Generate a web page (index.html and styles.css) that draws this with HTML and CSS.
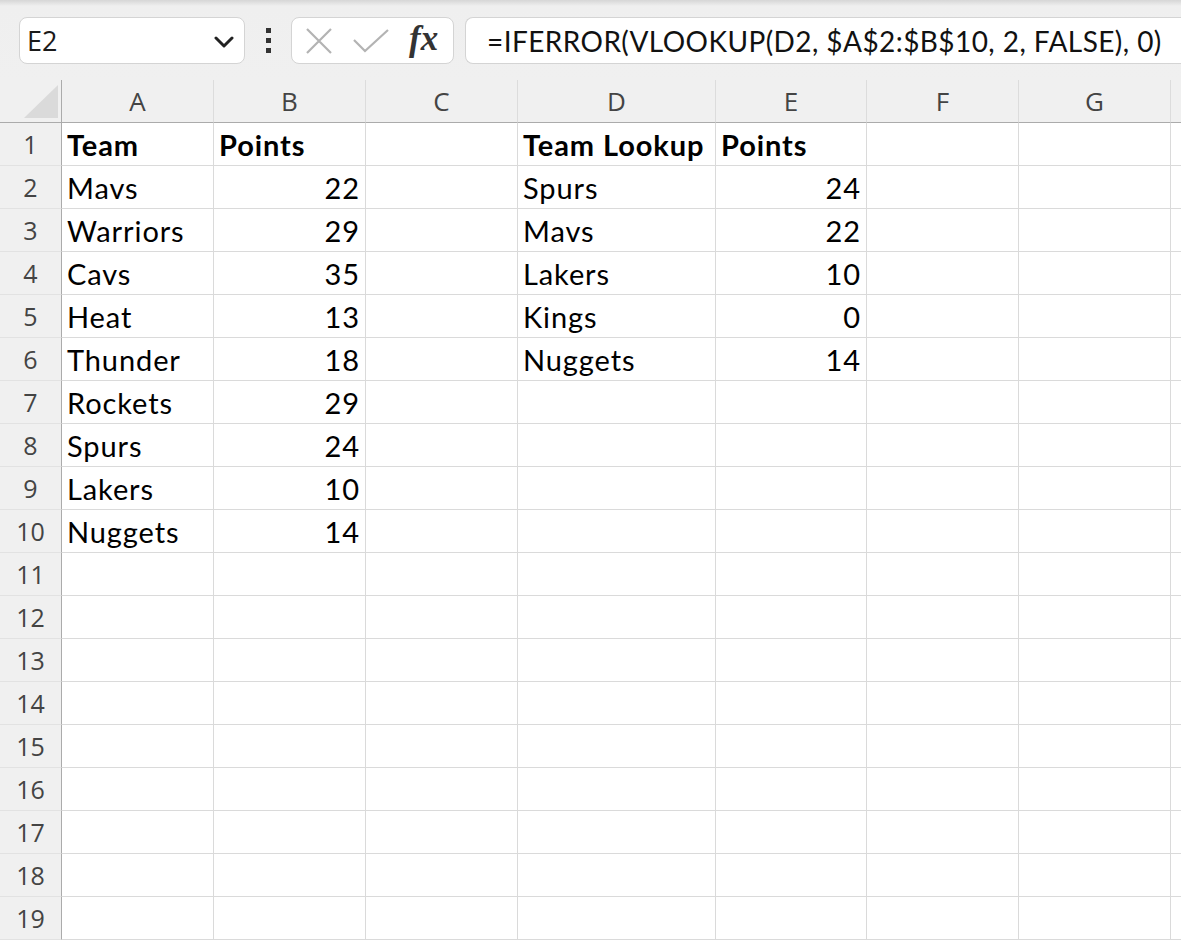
FILE: index.html
```html
<!DOCTYPE html>
<html lang="en">
<head>
  <meta charset="UTF-8" />
  <title>Team Lookup</title>
  <link rel="stylesheet" href="styles.css">
</head>
<body>

  <div class="toolbar">
    <div class="name-box">
      <span class="cell-ref">E2</span>
      <svg class="chevron" width="20" height="12" viewBox="0 0 20 12"><path d="M2 2 L10 10 L18 2" fill="none" stroke="#222" stroke-width="3" stroke-linecap="round" stroke-linejoin="round"/></svg>
    </div>
    <div class="kebab"><span></span><span></span><span></span></div>
    <div class="fx-box">
      <svg width="28" height="28" viewBox="0 0 28 28"><path d="M2 2 L26 26 M26 2 L2 26" stroke="#b3b3b3" stroke-width="2.2" fill="none"/></svg>
      <svg width="36" height="24" viewBox="0 0 36 24"><path d="M1 11 L12 22 L35 1" stroke="#b3b3b3" stroke-width="2.2" fill="none"/></svg>
      <span class="fx">fx</span>
    </div>
    <div class="formula">=IFERROR(VLOOKUP(D2, $A$2:$B$10, 2, FALSE), 0)</div>
  </div>

  <div class="sheet">
    <div class="row head">
      <div class="corner"><span class="tri"></span></div>
      <div>A</div><div>B</div><div>C</div><div>D</div><div>E</div><div>F</div><div>G</div><div></div>
    </div>
    <div class="row"><div class="num">1</div><div class="b">Team</div><div class="b">Points</div><div></div><div class="b">Team Lookup</div><div class="b">Points</div><div></div><div></div><div></div></div>
    <div class="row"><div class="num">2</div><div>Mavs</div><div class="r">22</div><div></div><div>Spurs</div><div class="r">24</div><div></div><div></div><div></div></div>
    <div class="row"><div class="num">3</div><div>Warriors</div><div class="r">29</div><div></div><div>Mavs</div><div class="r">22</div><div></div><div></div><div></div></div>
    <div class="row"><div class="num">4</div><div>Cavs</div><div class="r">35</div><div></div><div>Lakers</div><div class="r">10</div><div></div><div></div><div></div></div>
    <div class="row"><div class="num">5</div><div>Heat</div><div class="r">13</div><div></div><div>Kings</div><div class="r">0</div><div></div><div></div><div></div></div>
    <div class="row"><div class="num">6</div><div>Thunder</div><div class="r">18</div><div></div><div>Nuggets</div><div class="r">14</div><div></div><div></div><div></div></div>
    <div class="row"><div class="num">7</div><div>Rockets</div><div class="r">29</div><div></div><div></div><div></div><div></div><div></div><div></div></div>
    <div class="row"><div class="num">8</div><div>Spurs</div><div class="r">24</div><div></div><div></div><div></div><div></div><div></div><div></div></div>
    <div class="row"><div class="num">9</div><div>Lakers</div><div class="r">10</div><div></div><div></div><div></div><div></div><div></div><div></div></div>
    <div class="row"><div class="num">10</div><div>Nuggets</div><div class="r">14</div><div></div><div></div><div></div><div></div><div></div><div></div></div>
    <div class="row"><div class="num">11</div><div></div><div></div><div></div><div></div><div></div><div></div><div></div><div></div></div>
    <div class="row"><div class="num">12</div><div></div><div></div><div></div><div></div><div></div><div></div><div></div><div></div></div>
    <div class="row"><div class="num">13</div><div></div><div></div><div></div><div></div><div></div><div></div><div></div><div></div></div>
    <div class="row"><div class="num">14</div><div></div><div></div><div></div><div></div><div></div><div></div><div></div><div></div></div>
    <div class="row"><div class="num">15</div><div></div><div></div><div></div><div></div><div></div><div></div><div></div><div></div></div>
    <div class="row"><div class="num">16</div><div></div><div></div><div></div><div></div><div></div><div></div><div></div><div></div></div>
    <div class="row"><div class="num">17</div><div></div><div></div><div></div><div></div><div></div><div></div><div></div><div></div></div>
    <div class="row"><div class="num">18</div><div></div><div></div><div></div><div></div><div></div><div></div><div></div><div></div></div>
    <div class="row"><div class="num">19</div><div></div><div></div><div></div><div></div><div></div><div></div><div></div><div></div></div>
  </div>

</body>
</html>
```

FILE: styles.css
```css
body {
  margin: 0;
  background-color: #ffffff;
  overflow: hidden;
}

.toolbar {
  height: 80px;
  box-sizing: border-box;
  padding: 17px 0 0 19px;
  display: flex;
  align-items: flex-start;
  background: linear-gradient(#d6d6d6, #efefef 6px, #f0f0f0);
}

.name-box, .fx-box, .formula {
  height: 47px;
  box-sizing: border-box;
  background-color: #ffffff;
  border: 1px solid #d4d4d4;
  border-radius: 8px;
  display: flex;
  align-items: center;
}

.name-box {
  width: 226px;
  padding: 0 10px 0 7px;
  justify-content: space-between;
}

.cell-ref {
  font-family: "Open Sans", sans-serif;
  font-size: 27px;
  color: #1a1a1a;
}

.chevron {
  margin-top: 3px;
}

.kebab {
  width: 46px;
  height: 47px;
  display: flex;
  flex-direction: column;
  align-items: center;
  justify-content: center;
  gap: 5px;
}

.kebab span {
  width: 5px;
  height: 5px;
  background-color: #333;
}

.fx-box {
  width: 163px;
  padding: 0 10px 0 13px;
  gap: 20px;
}

.fx {
  font-family: "Liberation Serif", serif;
  font-style: italic;
  font-weight: bold;
  font-size: 35px;
  color: #333;
  margin-left: 0;
  margin-top: -4px;
}

.formula {
  flex: 1;
  margin-left: 11px;
  border-radius: 8px 0 0 8px;
  border-right: none;
  padding-left: 21px;
  font-family: Lato, "Open Sans", sans-serif;
  font-size: 28px;
  letter-spacing: 0.43px;
  color: #111;
  white-space: nowrap;
  overflow: hidden;
}

.sheet {
  font-family: Lato, "Open Sans", sans-serif;
  font-size: 29px;
  letter-spacing: 0.9px;
  color: #000;
}

.row {
  display: grid;
  grid-template-columns: 62px 152px 152px 152px 198px 151px 152px 152px 1fr;
  height: 43px;
}

.row > div {
  border-right: 1px solid #dadada;
  border-bottom: 1px solid #dadada;
  box-sizing: border-box;
  padding: 0 5px;
  line-height: 43px;
  white-space: nowrap;
  overflow: hidden;
}

.row > .r {
  text-align: right;
}

.row > .b {
  font-weight: bold;
}

.row > .num {
  background-color: #f0f0f0;
  border-right: 1px solid #ababab;
  border-bottom: 1px solid #e2e2e2;
  text-align: center;
  padding: 0;
  font-family: "Open Sans", sans-serif;
  font-size: 25px;
  letter-spacing: 0;
  color: #444;
}

.head > div {
  background-color: #f0f0f0;
  border-bottom: 1px solid #ababab;
  border-right: 1px solid #dcdcdc;
  text-align: center;
  font-family: "Open Sans", sans-serif;
  font-size: 26px;
  letter-spacing: 0;
  color: #444;
}

.head > .corner {
  border-right: 1px solid #ababab;
  position: relative;
}

.tri {
  position: absolute;
  right: 3px;
  bottom: 4px;
  width: 0;
  height: 0;
  border-left: 34px solid transparent;
  border-bottom: 33px solid #dadada;
}
```
